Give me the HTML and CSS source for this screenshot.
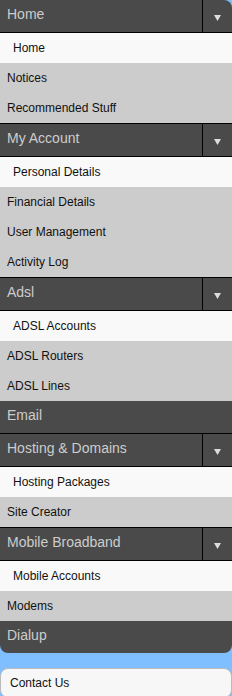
FILE: index.html
```html
<!DOCTYPE html>
<html lang="en">
<head>
    <meta charset="UTF-8">
    <meta name="viewport" content="width=device-width, initial-scale=1.0">
    <title>Menu</title>
    <link rel="stylesheet" href="styles.css">
</head>
<body>
    <div class="menu">
        <div class="group">
            <div class="head split"><span class="label">Home</span><span class="toggle"><svg width="7" height="6" viewBox="0 0 7 6"><path d="M0 0H7L3.5 6Z" fill="#ddd"/></svg></span></div>
            <ul class="sub">
                <li class="current">Home</li>
                <li>Notices</li>
                <li>Recommended Stuff</li>
            </ul>
        </div>

        <div class="group">
            <div class="head split"><span class="label">My Account</span><span class="toggle"><svg width="7" height="6" viewBox="0 0 7 6"><path d="M0 0H7L3.5 6Z" fill="#ddd"/></svg></span></div>
            <ul class="sub">
                <li class="current">Personal Details</li>
                <li>Financial Details</li>
                <li>User Management</li>
                <li>Activity Log</li>
            </ul>
        </div>

        <div class="group">
            <div class="head split"><span class="label">Adsl</span><span class="toggle"><svg width="7" height="6" viewBox="0 0 7 6"><path d="M0 0H7L3.5 6Z" fill="#ddd"/></svg></span></div>
            <ul class="sub">
                <li class="current">ADSL Accounts</li>
                <li>ADSL Routers</li>
                <li>ADSL Lines</li>
            </ul>
        </div>

        <div class="group">
            <div class="head"><span class="label">Email</span></div>
        </div>

        <div class="group">
            <div class="head split"><span class="label">Hosting &amp; Domains</span><span class="toggle"><svg width="7" height="6" viewBox="0 0 7 6"><path d="M0 0H7L3.5 6Z" fill="#ddd"/></svg></span></div>
            <ul class="sub">
                <li class="current">Hosting Packages</li>
                <li>Site Creator</li>
            </ul>
        </div>

        <div class="group">
            <div class="head split"><span class="label">Mobile Broadband</span><span class="toggle"><svg width="7" height="6" viewBox="0 0 7 6"><path d="M0 0H7L3.5 6Z" fill="#ddd"/></svg></span></div>
            <ul class="sub">
                <li class="current">Mobile Accounts</li>
                <li>Modems</li>
            </ul>
        </div>

        <div class="group">
            <div class="head"><span class="label">Dialup</span></div>
        </div>
    </div>

    <div class="contact">Contact Us</div>
</body>
</html>
```

FILE: styles.css
```css
body {
    margin: 0;
    background-color: #80bfff;
    font-family: "Liberation Sans", Arial, sans-serif;
}

.menu {
    background-color: #4a4a4a;
    border-radius: 0 8px 8px 8px;
    overflow: hidden;
}

.head {
    display: flex;
    height: 32px;
    color: #cdcdcd;
    font-size: 14px;
}

.head.split {
    border-top: 1px solid #000;
}

.group:first-child .head {
    border-top: none;
}

.label {
    flex: 1;
    padding-left: 7px;
    padding-bottom: 4px;
    line-height: 28px;
}

.toggle {
    width: 29px;
    border-left: 1px solid #000;
    display: flex;
    align-items: center;
    justify-content: center;
    padding-top: 3px;
}

.sub {
    list-style: none;
    margin: 0;
    padding: 0;
    border-top: 1px solid #000;
}

.sub li {
    height: 30px;
    line-height: 30px;
    padding-left: 7px;
    font-size: 12px;
    color: #111;
    background-color: #cccccc;
}

.sub li.current {
    background-color: #f9f9f9;
    padding-left: 13px;
}

.contact {
    margin-top: 15px;
    height: 28px;
    line-height: 28px;
    padding-left: 9px;
    font-size: 12px;
    color: #111;
    background-color: #f7f7f7;
    border: 1px solid #bbb;
    border-radius: 8px;
}
```
